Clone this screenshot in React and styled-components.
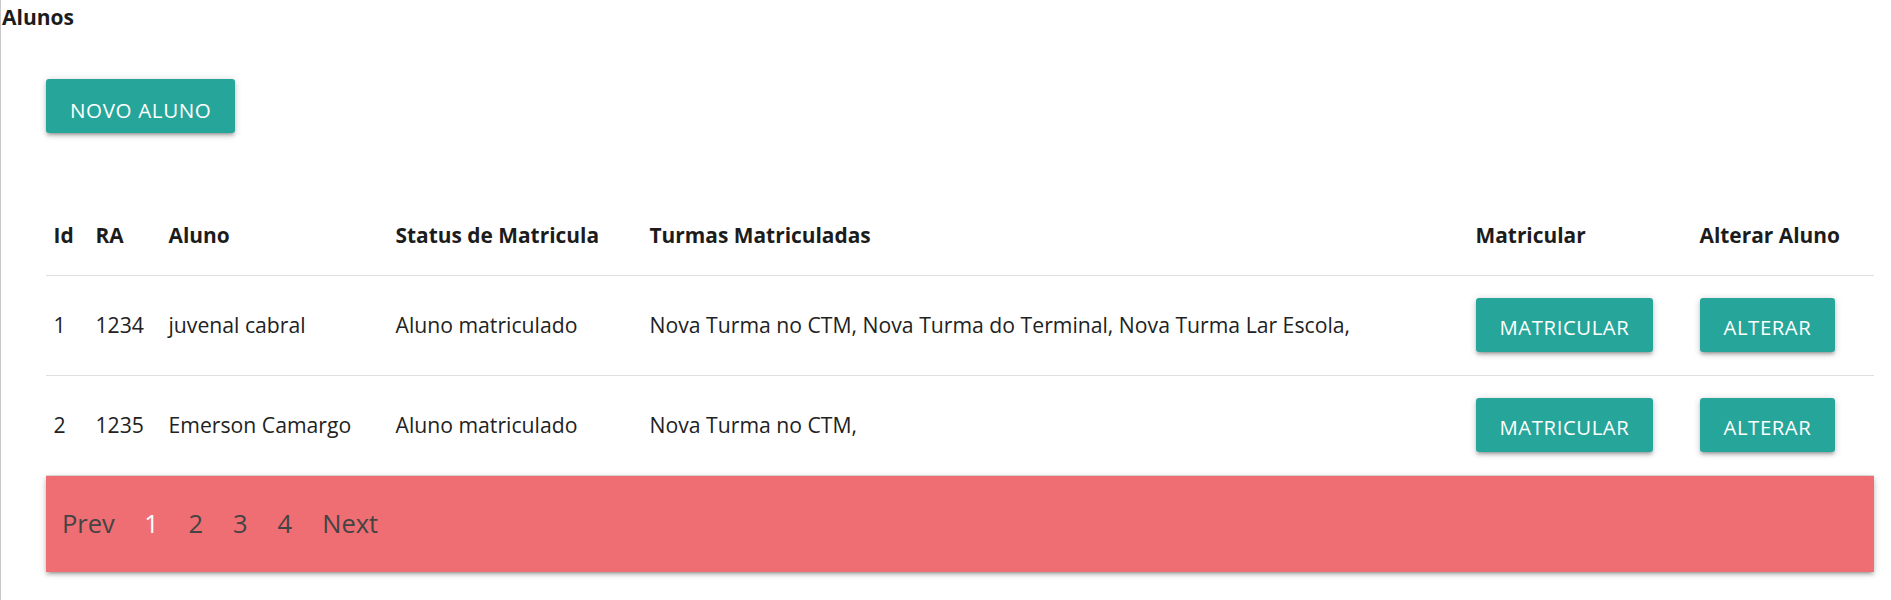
import React from "react";
import styled, { createGlobalStyle } from "styled-components";

const GlobalStyle = createGlobalStyle`
  html, body { margin: 0; padding: 0; background: #fff; }
  body {
    font-family: "Open Sans", "Noto Sans", "Liberation Sans", sans-serif;
    color: rgba(0, 0, 0, 0.87);
  }
  * { box-sizing: border-box; }
`;

const Page = styled.div`
  min-height: 100vh;
  border-left: 1px solid #c8c8c8;
`;

const Title = styled.div`
  font-weight: 700;
  font-size: 21px;
  line-height: 34px;
  height: 34px;
  padding-left: 1px;
  color: #1c1c1c;
`;

const Content = styled.div`
  padding: 45px 17px 0 45px;
`;

const shadow = `0 3px 3px 0 rgba(0,0,0,0.14), 0 4.5px 1.5px -3px rgba(0,0,0,0.12), 0 1.5px 7.5px 0 rgba(0,0,0,0.2)`;

const Button = styled.button`
  display: inline-block;
  border: none;
  border-radius: 3px;
  height: 54px;
  line-height: 50px;
  padding: ${(p) => (p.$big ? 6 : 4)}px 24px 0;
  background: #26a69a;
  color: #fff;
  font-family: inherit;
  font-size: ${(p) => (p.$big ? 20.6 : 20.3)}px;
  letter-spacing: 0.6px;
  text-transform: uppercase;
  box-shadow: ${shadow};
  cursor: pointer;
  vertical-align: middle;
  overflow: hidden;
`;

const Table = styled.table`
  width: 100%;
  margin-top: 63px;
  border-collapse: collapse;
  table-layout: fixed;
`;

const Row = styled.tr`
  border-bottom: 1px solid rgba(0, 0, 0, 0.12);
`;

const Th = styled.th`
  padding: 22.5px 7.5px;
  text-align: left;
  vertical-align: middle;
  font-weight: 700;
  font-size: 20.9px;
  line-height: 33.75px;
  color: #1c1c1c;
  white-space: nowrap;
`;

const Td = styled.td`
  padding: 22.5px 7.5px;
  text-align: left;
  vertical-align: middle;
  font-size: 21.2px;
  line-height: 33.75px;
  color: #222;
  white-space: nowrap;
`;

const Nav = styled.nav`
  height: 96px;
  background: #ee6e73;
  box-shadow: ${shadow};
  display: flex;
  align-items: center;
  padding-left: 1px;
`;

const PageList = styled.ul`
  list-style: none;
  margin: 0;
  padding: 0;
  display: flex;
  align-items: center;
`;

const PageItem = styled.li`
  display: block;
`;

const PageLink = styled.a`
  display: block;
  padding: 0 ${(p) => p.$pad}px;
  line-height: 45px;
  font-size: 25.5px;
  color: ${(p) => (p.$active ? "#fff" : "#444")};
  text-decoration: none;
  cursor: pointer;
`;

const cols = [42, 73, 227, 254, 826, 224, 182];
const headers = ["Id", "RA", "Aluno", "Status de Matricula", "Turmas Matriculadas", "Matricular", "Alterar Aluno"];

const alunos = [
  { id: 1, ra: 1234, nome: "juvenal cabral", status: "Aluno matriculado", turmas: "Nova Turma no CTM, Nova Turma do Terminal, Nova Turma Lar Escola," },
  { id: 2, ra: 1235, nome: "Emerson Camargo", status: "Aluno matriculado", turmas: "Nova Turma no CTM," },
];

const pages = [
  { label: "Prev", pad: 15 },
  { label: "1", pad: 14.5, active: true },
  { label: "2", pad: 15 },
  { label: "3", pad: 15 },
  { label: "4", pad: 15 },
  { label: "Next", pad: 15 },
];

export default function App() {
  return (
    <>
      <GlobalStyle />
      <Page>
        <Title>Alunos</Title>
        <Content>
          <Button $big>Novo Aluno</Button>
          <Table>
            <colgroup>
              {cols.map((w, i) => (
                <col key={i} style={{ width: w }} />
              ))}
            </colgroup>
            <thead>
              <Row>
                {headers.map((h) => (
                  <Th key={h}>{h}</Th>
                ))}
              </Row>
            </thead>
            <tbody>
              {alunos.map((a) => (
                <Row key={a.id}>
                  <Td>{a.id}</Td>
                  <Td>{a.ra}</Td>
                  <Td>{a.nome}</Td>
                  <Td>{a.status}</Td>
                  <Td>{a.turmas}</Td>
                  <Td>
                    <Button>Matricular</Button>
                  </Td>
                  <Td>
                    <Button>Alterar</Button>
                  </Td>
                </Row>
              ))}
            </tbody>
          </Table>
          <Nav>
            <PageList>
              {pages.map((p) => (
                <PageItem key={p.label}>
                  <PageLink $pad={p.pad} $active={p.active}>
                    {p.label}
                  </PageLink>
                </PageItem>
              ))}
            </PageList>
          </Nav>
        </Content>
      </Page>
    </>
  );
}
